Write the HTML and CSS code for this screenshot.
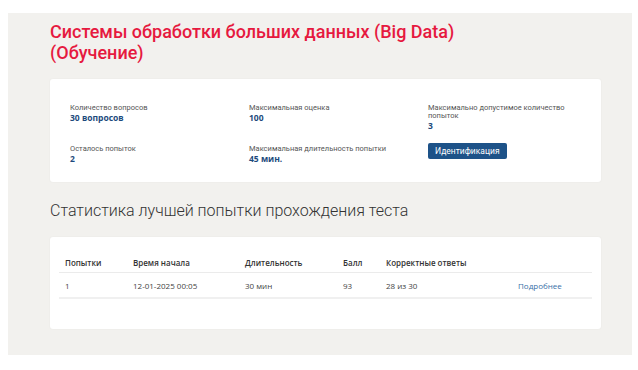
FILE: index.html
```html
<!DOCTYPE html>
<html lang="ru">
<head>
  <meta charset="UTF-8" />
  <meta name="viewport" content="width=device-width, initial-scale=1.0"/>
  <title>Системы обработки больших данных (Big Data) (Обучение)</title>
  <link rel="stylesheet" href="styles.css">
</head>
<body>

<div class="page">
  <h1 class="test-title">Системы обработки больших данных (Big Data) (Обучение)</h1>

  <div class="card info-card">
    <div class="info-grid">
      <div class="info-item">
        <div class="info-label">Количество вопросов</div>
        <div class="info-value">30 вопросов</div>
      </div>
      <div class="info-item">
        <div class="info-label">Максимальная оценка</div>
        <div class="info-value">100</div>
      </div>
      <div class="info-item">
        <div class="info-label">Максимально допустимое количество попыток</div>
        <div class="info-value">3</div>
      </div>
      <div class="info-item">
        <div class="info-label">Осталось попыток</div>
        <div class="info-value">2</div>
      </div>
      <div class="info-item">
        <div class="info-label">Максимальная длительность попытки</div>
        <div class="info-value">45 мин.</div>
      </div>
      <div class="info-item">
        <button class="btn-ident">Идентификация</button>
      </div>
    </div>
  </div>

  <h2 class="stats-title">Статистика лучшей попытки прохождения теста</h2>

  <div class="card stats-card">
    <table class="stats-table">
      <thead>
        <tr>
          <th class="col-try">Попытки</th>
          <th class="col-start">Время начала</th>
          <th class="col-dur">Длительность</th>
          <th class="col-score">Балл</th>
          <th class="col-correct">Корректные ответы</th>
          <th class="col-link"></th>
        </tr>
      </thead>
      <tbody>
        <tr>
          <td>1</td>
          <td>12-01-2025 00:05</td>
          <td>30 мин</td>
          <td>93</td>
          <td>28 из 30</td>
          <td><a href="#" class="more-link">Подробнее</a></td>
        </tr>
      </tbody>
    </table>
  </div>
</div>

</body>
</html>
```

FILE: styles.css
```css
body {
  margin: 0;
  background: #fff;
  font-family: 'Open Sans', sans-serif;
  color: #333;
}
.page {
  margin: 13px 6px 0 8px;
  height: 342px;
  box-sizing: border-box;
  background: #f2f1ee;
  padding: 8px 31px 0 42px;
}
.test-title {
  margin: 0 0 16px;
  max-width: 420px;
  font-family: Roboto, sans-serif;
  font-weight: 500;
  font-size: 18px;
  line-height: 21px;
  color: #e6193f;
}
.card {
  background: #fff;
  border-radius: 3px;
  box-shadow: 0 0 2px rgba(0,0,0,0.05);
}
.info-card {
  padding: 25px 20px 18px;
}
.info-grid {
  display: grid;
  grid-template-columns: repeat(3, 1fr);
  column-gap: 26px;
  row-gap: 14px;
}
.info-item {
  padding-right: 10px;
}
.info-label {
  font-family: Roboto, sans-serif;
  font-size: 7.5px;
  line-height: 8px;
  color: #555;
}
.info-value {
  margin-top: 1px;
  font-size: 8.5px;
  line-height: 10px;
  font-weight: 700;
  color: #1d4a7c;
}
.btn-ident {
  display: block;
  margin-top: -2px;
  font-family: Roboto, sans-serif;
  font-size: 8.5px;
  line-height: 16px;
  height: 16px;
  padding: 0 7px;
  border: none;
  border-radius: 2px;
  background: #1d5288;
  color: #fff;
  cursor: pointer;
}
.stats-title {
  margin: 19px 0 16px;
  font-family: Roboto, sans-serif;
  font-weight: 300;
  font-size: 16px;
  line-height: 20px;
  color: #333;
}
.stats-card {
  padding: 13px 9px 30px;
}
.stats-table {
  width: 100%;
  border-collapse: collapse;
  font-size: 8px;
  line-height: 12px;
}
.stats-table th {
  text-align: left;
  font-weight: 600;
  color: #333;
  padding: 7px 6px 3px;
  border-bottom: 1px solid #ebebeb;
}
.stats-table td {
  padding: 7px 6px 5px;
  color: #444;
  border-bottom: 2px solid #f0f0f0;
}
.col-try { width: 56px; }
.col-start { width: 100px; }
.col-dur { width: 86px; }
.col-score { width: 31px; }
.col-correct { width: 120px; }
.more-link {
  color: #3a6fa8;
  text-decoration: none;
}
```
